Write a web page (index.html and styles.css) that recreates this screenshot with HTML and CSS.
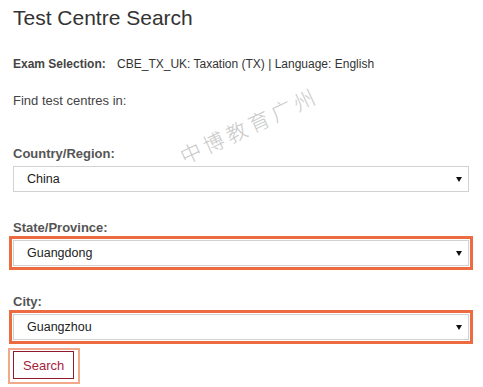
FILE: index.html
```html
<!DOCTYPE html>
<html lang="en">
<head>
  <meta charset="utf-8" />
  <meta name="viewport" content="width=device-width, initial-scale=1" />
  <title>Test Centre Search</title>
  <link rel="stylesheet" href="styles.css">
</head>
<body>
  <!-- Page title and exam summary -->
  <h1>Test Centre Search</h1>
  <p class="exam"><strong>Exam Selection:</strong> CBE_TX_UK: Taxation (TX) | Language: English</p>
  <p class="intro">Find test centres in:</p>

  <!-- Location filters -->
  <form class="search-form">
    <label class="field-label" for="country">Country/Region:</label>
    <div class="select-wrap">
      <select id="country">
        <option>China</option>
      </select>
    </div>

    <label class="field-label" for="state">State/Province:</label>
    <div class="mark">
      <div class="select-wrap">
        <select id="state">
          <option>Guangdong</option>
        </select>
      </div>
    </div>

    <label class="field-label" for="city">City:</label>
    <div class="mark mark-end">
      <div class="select-wrap">
        <select id="city">
          <option>Guangzhou</option>
        </select>
      </div>
    </div>

    <div class="mark-light">
      <button type="button" class="search-btn">Search</button>
    </div>
  </form>

  <!-- watermark -->
  <div class="watermark">中博教育广州</div>
</body>
</html>
```

FILE: styles.css
```css
body {
  margin: 0;
  padding: 0 14px 0 13px;
  font-family: "Liberation Sans", Arial, sans-serif;
  color: #333;
  background: #fff;
  position: relative;
}
h1 {
  margin: 6px 0 0;
  font-size: 21px;
  line-height: 24px;
  font-weight: normal;
  color: #333;
}
.exam {
  margin: 26px 0 0;
  font-size: 12px;
  line-height: 16px;
  color: #333;
}
.exam strong {
  color: #444;
  margin-right: 8px;
}
.intro {
  margin: 21px 0 0;
  font-size: 13px;
  line-height: 16px;
  color: #444;
}
.search-form {
  margin-top: 37px;
}
.field-label {
  display: block;
  font-size: 13px;
  line-height: 16px;
  font-weight: bold;
  color: #555;
  margin-bottom: 4px;
}
.select-wrap {
  position: relative;
  margin-bottom: 28px;
}
.select-wrap::after {
  content: "";
  position: absolute;
  right: 7px;
  top: 11px;
  border-left: 3px solid transparent;
  border-right: 3px solid transparent;
  border-top: 5px solid #111;
}
.select-wrap select {
  display: block;
  width: 100%;
  height: 26px;
  -webkit-appearance: none;
  appearance: none;
  border: 1px solid #d2d2d2;
  border-radius: 0;
  background: #fff;
  padding: 0 0 0 13px;
  font-family: "Liberation Sans", Arial, sans-serif;
  font-size: 12.5px;
  color: #222;
}
.mark {
  border: 3px solid #ec6b41;
  padding: 1px;
  margin: -4px -4px 24px;
}
.mark .select-wrap {
  margin-bottom: 0;
}
.mark-end {
  margin-bottom: -4px;
}
.mark-light {
  display: inline-block;
  border: 2px solid #f2a98a;
  padding: 1px 4px 3px 3px;
  margin: 8px 0 0 -5px;
}
.search-btn {
  display: block;
  height: 28px;
  padding: 0 9px;
  border: 1px solid #8c1c2c;
  border-radius: 0;
  background: #fff;
  color: #a61c3c;
  font-family: "Liberation Sans", Arial, sans-serif;
  font-size: 13px;
}
.watermark {
  position: absolute;
  left: 174px;
  top: 113px;
  font-family: "Noto Sans CJK SC", sans-serif;
  font-size: 21px;
  font-weight: 300;
  letter-spacing: 4px;
  line-height: 24px;
  color: #c8c8c8;
  transform: rotate(-25deg);
  white-space: nowrap;
}
```
